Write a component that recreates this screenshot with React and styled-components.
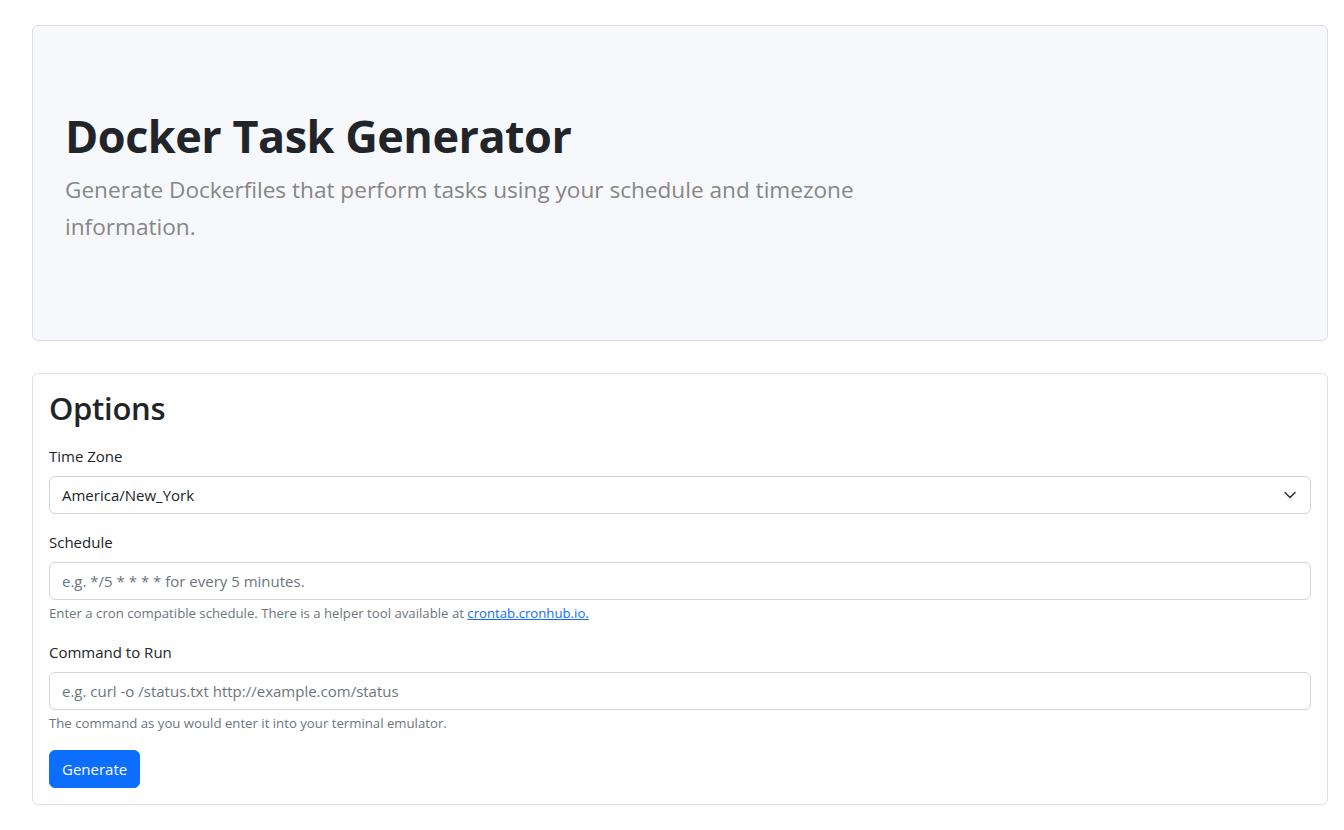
import styled, { createGlobalStyle } from 'styled-components'

const GlobalStyle = createGlobalStyle`
  * { box-sizing: border-box; }
  body {
    margin: 0;
    background: #fff;
    color: #212529;
    font-family: "Open Sans", "Noto Sans", Arial, sans-serif;
    font-size: 16px;
    line-height: 1.5;
  }
`

const Page = styled.div`
  padding: 25px 16px 24px 32px;
  display: flex;
  flex-direction: column;
  gap: 32px;
`

const Hero = styled.header`
  background: #f7f8fc;
  border: 1px solid #dcdde3;
  border-radius: 6px;
  padding: 83px 32px 79px;
`

const Title = styled.h1`
  margin: 0 0 8px;
  font-size: 45px;
  font-weight: 700;
  line-height: 1.2;
  letter-spacing: -0.5px;
  color: #212529;
`

const Lead = styled.p`
  margin: 0 0 16px;
  max-width: 830px;
  font-size: 22.6px;
  line-height: 37px;
  color: #868686;
`

const Card = styled.section`
  border: 1px solid #dee2e6;
  border-radius: 6px;
  padding: 16px;
`

const CardTitle = styled.h2`
  margin: 0 0 17px;
  font-size: 31px;
  font-weight: 600;
  line-height: 1.2;
  letter-spacing: -0.3px;
`

const Field = styled.div`
  margin-bottom: 16px;
`

const Label = styled.label`
  display: block;
  margin-bottom: 8px;
  font-size: 15px;
  line-height: 24px;
`

const Input = styled.input`
  display: block;
  width: 100%;
  height: 38px;
  padding: 6px 12px;
  font: inherit;
  font-size: 15px;
  color: #212529;
  background: #fff;
  border: 1px solid #ced4da;
  border-radius: 6px;
  outline: none;

  &::placeholder {
    color: #6c757d;
  }
`

const SelectWrap = styled.div`
  position: relative;
`

const Select = styled.select`
  display: block;
  width: 100%;
  height: 38px;
  padding: 6px 36px 6px 12px;
  font: inherit;
  font-size: 15px;
  color: #212529;
  background: #fff;
  border: 1px solid #ced4da;
  border-radius: 6px;
  appearance: none;
  outline: none;
`

const Chevron = styled.svg`
  position: absolute;
  right: 15px;
  top: 15px;
  width: 12px;
  height: 8px;
  pointer-events: none;
`

const Help = styled.div`
  margin-top: 3px;
  font-size: 13.2px;
  line-height: 21px;
  color: #6c757d;

  a {
    color: #0d6efd;
    text-decoration: underline;
  }
`

const Button = styled.button`
  display: block;
  height: 38px;
  padding: 6px 12px;
  font: inherit;
  font-size: 15px;
  color: #fff;
  background: #0d6efd;
  border: 1px solid #0d6efd;
  border-radius: 6px;
  cursor: pointer;
`

const App = () => {
  return (
    <Page>
      <GlobalStyle />
      <Hero>
        <Title>Docker Task Generator</Title>
        <Lead>Generate Dockerfiles that perform tasks using your schedule and timezone information.</Lead>
      </Hero>
      <Card>
        <CardTitle>Options</CardTitle>
        <Field>
          <Label htmlFor="tz">Time Zone</Label>
          <SelectWrap>
            <Select id="tz" defaultValue="America/New_York">
              <option>America/New_York</option>
              <option>America/Chicago</option>
              <option>America/Denver</option>
              <option>America/Los_Angeles</option>
              <option>UTC</option>
            </Select>
            <Chevron viewBox="0 0 12 8">
              <path d="M1 1.5 6 6.5 11 1.5" fill="none" stroke="#343a40" strokeWidth="1.6" strokeLinecap="round" strokeLinejoin="round" />
            </Chevron>
          </SelectWrap>
        </Field>
        <Field>
          <Label htmlFor="schedule">Schedule</Label>
          <Input id="schedule" placeholder="e.g. */5 * * * * for every 5 minutes." />
          <Help>
            Enter a cron compatible schedule. There is a helper tool available at <a href="#">crontab.cronhub.io.</a>
          </Help>
        </Field>
        <Field>
          <Label htmlFor="cmd">Command to Run</Label>
          <Input id="cmd" placeholder="e.g. curl -o /status.txt http://example.com/status" />
          <Help>The command as you would enter it into your terminal emulator.</Help>
        </Field>
        <Button type="button">Generate</Button>
      </Card>
    </Page>
  )
}

export default App
